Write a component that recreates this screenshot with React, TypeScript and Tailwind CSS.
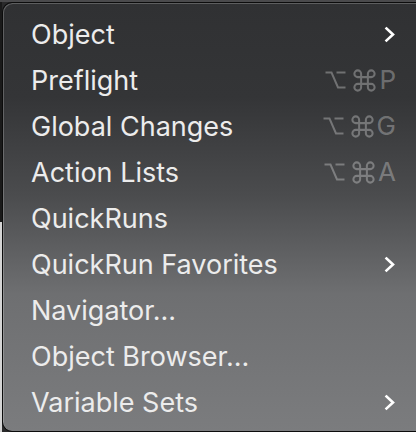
import React from "react";
import { Command } from "lucide-react";

type Item = { label: string; shortcut?: string; sub?: boolean };

const items: Item[] = [
  { label: "Object", sub: true },
  { label: "Preflight", shortcut: "P" },
  { label: "Global Changes", shortcut: "G" },
  { label: "Action Lists", shortcut: "A" },
  { label: "QuickRuns" },
  { label: "QuickRun Favorites", sub: true },
  { label: "Navigator..." },
  { label: "Object Browser..." },
  { label: "Variable Sets", sub: true },
];

function Chevron() {
  return (
    <svg width="12" height="17" viewBox="0 0 12 17" fill="none">
      <polyline
        points="2.5,2.5 9,8.5 2.5,14.5"
        stroke="#ffffff"
        strokeWidth="2.6"
        strokeLinecap="square"
        strokeLinejoin="miter"
      />
    </svg>
  );
}

function OptionKey() {
  return (
    <svg width="21" height="20" viewBox="0 0 21 20" fill="none" stroke="currentColor" strokeWidth="2">
      <path d="M0.5 2.5 H6.5 L13 17.5 H20.5" strokeLinejoin="miter" />
      <path d="M11.5 2.5 H20.5" />
    </svg>
  );
}

function Shortcut({ k }: { k: string }) {
  return (
    <div className="flex items-center leading-none text-white/30">
      <OptionKey />
      <Command size={27} strokeWidth={1.8} className="ml-[5px]" />
      <span className="ml-[1px] [font-family:Inter,sans-serif] text-[26px]">{k}</span>
    </div>
  );
}

export default function App() {
  return (
    <div className="w-[416px] h-[432px] flex flex-col overflow-hidden bg-[#2a2a2b]">
      <div className="h-[2px] bg-[#4a4a4c] shrink-0" />
      <div className="flex flex-1">
        <div className="w-[2px] shrink-0 bg-[linear-gradient(to_bottom,#1a1a1a_0,#1a1a1a_220px,#d4d4d4_220px,#d4d4d4_100%)]" />
        <div className="flex-1 rounded-tl-[10px] rounded-bl-[10px] border-l border-t border-b border-[#0c0c0c] shadow-[inset_1px_1px_0_rgba(255,255,255,0.22)] bg-[linear-gradient(to_bottom,#303133_0%,#343537_22%,#4b4c4e_45%,#6e6f71_68%,#7b7c7e_100%)] pt-[8px] pl-[28px] pr-[20px] [font-family:Inter,sans-serif]">
          {items.map((it) => (
            <div key={it.label} className="h-[46px] flex items-center justify-between">
              <span className="text-[27px] leading-none text-[#ececec]">{it.label}</span>
              {it.sub && <Chevron />}
              {it.shortcut && <Shortcut k={it.shortcut} />}
            </div>
          ))}
        </div>
      </div>
    </div>
  );
}
